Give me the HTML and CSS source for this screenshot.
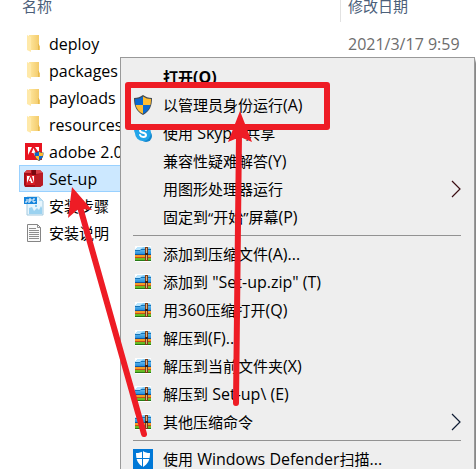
FILE: index.html
```html
<!DOCTYPE html>
<html lang="zh-CN">
<head>
<meta charset="utf-8">
<title>名称</title>
<link rel="stylesheet" href="styles.css">
</head>
<body>
<svg class="defs" aria-hidden="true">
  <defs>
    <linearGradient id="gold" x2="1"><stop offset="0" stop-color="#ffe8a0"/><stop offset="1" stop-color="#f2c866"/></linearGradient>
    <linearGradient id="sky" y2="1" x2="0"><stop offset="0" stop-color="#8fd3f8"/><stop offset="1" stop-color="#1686d9"/></linearGradient>
    <symbol id="folder" viewBox="0 0 20 20">
      <path d="M5 1h10v10l1 1v4H5z" fill="url(#gold)"/>
      <path d="M3 1l4 2v15l-4-2z" fill="#ffe9a9"/>
      <path d="M14 10h1v6h-1z" fill="#e5b94f"/>
    </symbol>
    <symbol id="shield" viewBox="0 0 20 20">
      <path d="M10 0c3 2 5 3 9 3 0 8-2 13-9 17C3 16 1 11 1 3c4 0 6-1 9-3z" fill="#444b50"/>
      <path d="M10 1.500V10H2.600C2.200 8 2 6 2 4c3 0 5.500-.8 8-2.500zM10 10h7.400c-1 4-3.400 6.800-7.400 8.800z" fill="#0b69cf"/>
      <path d="M10 1.500C12.500 3.200 15 4 18 4c0 2-.2 4-.6 6H10zM2.600 10H10v8.800C6 16.800 3.600 14 2.600 10z" fill="#ffbd32"/>
    </symbol>
    <symbol id="archive" viewBox="0 0 16 16">
      <path d="M0 0h16v16H0z" fill="#fff"/>
      <path d="M0 4l3-3h12l1 2v6H0z" fill="url(#sky)"/>
      <path d="M0 4l3-3h5L5 4z" fill="#b9e6ff"/>
      <path d="M0 4.500h5l1-1h10" fill="none" stroke="#1673b7"/>
      <path d="M0 8h16v1H0z" fill="#14559c"/>
      <path d="M0 9h16v3H0z" fill="#f89a24"/>
      <path d="M0 11h16v1H0z" fill="#c54f13"/>
      <path d="M0 12h16v3H0z" fill="#69bd26"/>
      <path d="M0 14h16v1H0z" fill="#277a16"/>
      <path d="M10 1h3v14h-3z" fill="#7d3c17"/>
      <path d="M11 2h1v5h-1zM11 9h1v5h-1z" fill="#d8b484"/>
      <path d="M10 7h3v2h-3z" fill="#3d1b0b"/>
    </symbol>
    <symbol id="adobe" viewBox="0 0 20 20">
      <path d="M1 1h17v17H1z" fill="#e81420"/>
      <path d="M4 13V5h4zM15 11V5h-4zM9.500 6l3.500 8h-2l-1.500-3H7.500z" fill="#fff"/>
      <svg x="10" y="9" width="10" height="10"><use href="#shield"/></svg>
    </symbol>
    <symbol id="package" viewBox="0 0 20 20">
      <path d="M0 4l3-3h13l3 3v12l-3 2H1l-1-2z" fill="#a70d17"/>
      <path d="M0 4l3-3h4v3zM12 1h4l3 3-7 1z" fill="#d84147"/>
      <path d="M8 1h4v5H8z" fill="#790910"/>
      <path d="M11 6l8-2v12l-3 2h-5z" fill="#b91b24"/>
      <path d="M2 6h9v10H2z" fill="#d71c25"/>
      <path d="M3 14V7h3zM10 14V7H8zM6.500 8l2.500 6H7l-.5-2H5z" fill="#fff"/>
    </symbol>
    <symbol id="picture" viewBox="0 0 20 20">
      <path d="M3 1h12l4 4v14H3z" fill="#e7f5fd" stroke="#a2c9df"/>
      <path d="M15 1v4h4z" fill="#b7dff5"/>
      <path d="M5 18v-6l3-1 2 4 3-3 2 2 2-4 1 2v6z" fill="#9bd2f0"/>
      <circle cx="12" cy="10" r="1" fill="#72bde9"/>
      <path d="M0 1h13v7H0z" fill="#1685dc"/>
      <path d="M3 3v3H1M5 7V3h2v2H5M11 3H9v3h2V5" fill="none" stroke="#fff"/>
    </symbol>
    <symbol id="document" viewBox="0 0 20 20">
      <path d="M3.500 1.500h10l3 3v14h-13z" fill="#fafafa" stroke="#858585"/>
      <path d="M13.500 1.500v3h3M5 5.500h7M5 7.500h10M5 9.500h10M5 11.500h10M5 13.500h10M5 15.500h10" fill="none" stroke="#8e8e8e"/>
    </symbol>
    <symbol id="skype" viewBox="0 0 20 20">
      <circle cx="7" cy="7" r="6" fill="#2aa7e8"/><circle cx="13" cy="13" r="6" fill="#1286cd"/><circle cx="10" cy="10" r="8" fill="#23a5e9"/>
      <path d="M13 7c-1-2-6-2-6 .5 0 3 6 1.500 6 4.500 0 2.500-5 2.500-6 0" fill="none" stroke="#fff" stroke-width="2" stroke-linecap="round"/>
    </symbol>
    <symbol id="defender" viewBox="0 0 20 20">
      <path d="M0 0h20v20H0z" fill="#0078d7"/>
      <path d="M10 2c2 1.500 4 2 7 2 0 7-2 11-7 14C5 15 3 11 3 4c3 0 5-.5 7-2z" fill="#fff"/>
      <path d="M9.500 2v16M3 9.500h14" stroke="#0078d7"/>
    </symbol>
    <symbol id="chevron" viewBox="0 0 10 18"><path d="M1 1l8 8-8 8" fill="none" stroke="currentColor" stroke-width="1.200"/></symbol>
  </defs>
</svg>
<main class="explorer">
  <table class="files">
    <thead><tr><th class="name">名称</th><th class="date">修改日期</th></tr></thead>
    <tbody>
      <tr><td><span class="file"><svg><use href="#folder"/></svg>deploy</span></td><td class="date">2021/3/17 9:59</td></tr>
      <tr><td><span class="file"><svg><use href="#folder"/></svg>packages</span></td><td></td></tr>
      <tr><td><span class="file"><svg><use href="#folder"/></svg>payloads</span></td><td></td></tr>
      <tr><td><span class="file"><svg><use href="#folder"/></svg>resources</span></td><td></td></tr>
      <tr><td><span class="file"><svg><use href="#adobe"/></svg>adobe 2.0</span></td><td></td></tr>
      <tr class="selected"><td><span class="file"><svg><use href="#package"/></svg>Set-up</span></td><td></td></tr>
      <tr><td><span class="file han"><svg><use href="#picture"/></svg>安装步骤</span></td><td></td></tr>
      <tr><td><span class="file han"><svg><use href="#document"/></svg>安装说明</span></td><td></td></tr>
    </tbody>
  </table>
  <div class="menu">
    <button class="default"><span class="label">打开<span class="latin">(O)</span></span></button>
    <button><svg class="icon"><use href="#shield"/></svg><span class="label">以管理员身份运行<span class="latin">(A)</span></span></button>
    <button><svg class="icon"><use href="#skype"/></svg><span class="label">使用<span class="latin"> Skype </span>共享</span></button>
    <button><span class="label">兼容性疑难解答<span class="latin">(Y)</span></span></button>
    <button><span class="label">用图形处理器运行</span><svg class="more warm"><use href="#chevron"/></svg></button>
    <button><span class="label">固定到“开始”屏幕<span class="latin">(P)</span></span></button>
    <hr>
    <button><svg class="icon small"><use href="#archive"/></svg><span class="label">添加到压缩文件<span class="latin">(A)...</span></span></button>
    <button><svg class="icon small"><use href="#archive"/></svg><span class="label">添加到<span class="latin"> "Set-up.zip" (T)</span></span></button>
    <button><svg class="icon small"><use href="#archive"/></svg><span class="label">用<span class="latin">360</span>压缩打开<span class="latin">(Q)</span></span></button>
    <button><svg class="icon small"><use href="#archive"/></svg><span class="label">解压到<span class="latin">(F)...</span></span></button>
    <button><svg class="icon small"><use href="#archive"/></svg><span class="label">解压到当前文件夹<span class="latin">(X)</span></span></button>
    <button><svg class="icon small"><use href="#archive"/></svg><span class="label">解压到<span class="latin"> Set-up\ (E)</span></span></button>
    <button><svg class="icon small"><use href="#archive"/></svg><span class="label">其他压缩命令</span><svg class="more"><use href="#chevron"/></svg></button>
    <hr>
    <button><svg class="icon"><use href="#defender"/></svg><span class="label">使用<span class="latin"> Windows Defender</span>扫描<span class="latin">...</span></span></button>
  </div>
  <svg class="marks" aria-hidden="true">
    <g fill="none" stroke="#ee1c25" stroke-width="6" stroke-linecap="round" stroke-linejoin="round">
      <path d="M128 85h199v42H128z"/>
      <path d="M144 434L80 207M236 403l3-268"/>
    </g>
    <path d="M72 187l20 23-10-1-5 1-9 8zM240 111l12 31-12-5-12 5z" fill="#ee1c25"/>
  </svg>
</main>
</body>
</html>
```
FILE: styles.css
```css
* { box-sizing: border-box; }
body {
  margin: 0;
  background: #fff;
  color: #000;
  font: 15px/20px "Open Sans", "Noto Sans CJK SC", sans-serif;
}
.defs { position: absolute; width: 0; height: 0; }
.explorer {
  position: relative;
  height: 100vh;
  padding-left: 19px;
  overflow: hidden;
}
.files {
  width: 100%;
  border-collapse: collapse;
  table-layout: fixed;
}
.files th {
  height: 30px;
  padding: 0 0 0 3px;
  color: #4c607a;
  font-weight: 400;
  line-height: 13px;
  text-align: left;
  vertical-align: top;
}
.files th.name { width: 321px; }
.files th.date {
  padding-left: 8px;
  background: linear-gradient(#e2e2e2, #e2e2e2) 0 0 / 1px 22px no-repeat;
}
.files td { height: 27px; padding: 0; }
.files td.date {
  padding-left: 8px;
  color: #6d6d6d;
  font-size: 16px;
  white-space: nowrap;
}
.file {
  display: flex;
  align-items: center;
  gap: 5px;
  padding-left: 5px;
  font-size: 16px;
}
.file svg { width: 20px; height: 20px; }
.file.han { font-size: 15px; }
.files .selected {
  background: #cce8ff;
  box-shadow: inset 0 0 0 1px #99d1ff;
}
.menu {
  position: absolute;
  top: 57px;
  left: 120px;
  right: 1px;
  padding: 5px 0;
  background: #eee;
  border: 1px solid #999;
  box-shadow: 4px 4px 3px #888;
}
.menu button {
  display: grid;
  grid-template-columns: 20px 1fr 10px;
  column-gap: 10px;
  align-items: center;
  width: 100%;
  height: 28px;
  padding: 0 13px 0 12px;
  border: 0;
  background: none;
  color: #000;
  font: inherit;
  text-align: left;
  white-space: nowrap;
}
.label { grid-column: 2; grid-row: 1; }
.latin { font-size: 16px; }
.menu .default { font-weight: 700; }
.icon { width: 20px; height: 20px; grid-column: 1; grid-row: 1; justify-self: center; }
.icon.small { width: 16px; height: 16px; }
.more { width: 10px; height: 18px; grid-column: 3; grid-row: 1; color: #0e1c33; }
.more.warm { color: #3a0d12; }
.menu hr {
  height: 1px;
  margin: 4px 13px 4px 12px;
  border: 0;
  background: #929292;
}
.marks {
  position: absolute;
  inset: 0;
  width: 100%;
  height: 100%;
  pointer-events: none;
}
```
